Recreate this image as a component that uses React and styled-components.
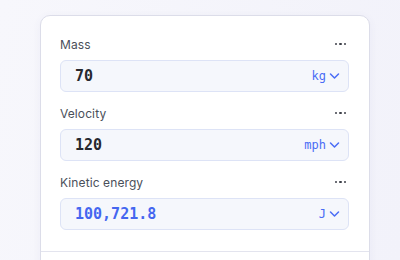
import React from 'react'
import styled, { createGlobalStyle } from 'styled-components'

const GlobalStyle = createGlobalStyle`
  html, body {
    margin: 0;
    padding: 0;
    height: 100%;
  }
  body {
    background: linear-gradient(100deg, #f7f7fc 0%, #f2f2fa 100%);
    font-family: Inter, "Noto Sans", sans-serif;
  }
`

const fields = [
  { label: 'Mass', value: '70', unit: 'kg' },
  { label: 'Velocity', value: '120', unit: 'mph' },
  { label: 'Kinetic energy', value: '100,721.8', unit: 'J', result: true },
]

const Page = styled.div`
  padding: 15px 30px 0 40px;
`

const Card = styled.div`
  width: 330px;
  box-sizing: border-box;
  background: #fff;
  border: 1px solid #dcdde9;
  border-radius: 10px;
  box-shadow: 0 2px 8px rgba(90, 90, 160, 0.06);
`

const Body = styled.div`
  display: flex;
  flex-direction: column;
  gap: 11px;
  padding: 18px 20px 21px 19px;
  border-bottom: 1px solid #e3e4ee;
`

const Field = styled.div`
  display: flex;
  flex-direction: column;
  gap: 6px;
`

const LabelRow = styled.div`
  height: 20px;
  display: flex;
  align-items: center;
  justify-content: space-between;
  padding-right: 3px;
`

const Label = styled.span`
  font-size: 12px;
  color: #4a4f5a;
  letter-spacing: 0.1px;
`

const Dots = styled.span`
  display: flex;
  gap: 2px;
  span {
    width: 2.4px;
    height: 2.4px;
    border-radius: 50%;
    background: #3c3f48;
  }
`

const InputBox = styled.div`
  height: 32px;
  box-sizing: border-box;
  display: flex;
  align-items: center;
  justify-content: space-between;
  padding: 0 8px 0 14px;
  background: #f5f7fc;
  border: 1px solid #dde3f6;
  border-radius: 6px;
`

const Value = styled.span`
  font-family: "DejaVu Sans Mono", "Liberation Mono", monospace;
  font-weight: bold;
  font-size: 15px;
  color: ${({ $result }) => ($result ? '#4466f0' : '#26282e')};
`

const Unit = styled.span`
  display: flex;
  align-items: center;
  gap: 3px;
  font-family: "DejaVu Sans Mono", "Liberation Mono", monospace;
  font-size: 12px;
  color: #4a6cf5;
`

const Footer = styled.div`
  height: 40px;
`

const Chevron = () => (
  <svg width="11" height="10" viewBox="0 0 11 10" fill="none">
    <path d="M1.5 3 L5.5 7 L9.5 3" stroke="#4a6cf5" strokeWidth="1.5" strokeLinecap="round" strokeLinejoin="round" />
  </svg>
)

const App = () => {
  return (
    <Page>
      <GlobalStyle />
      <Card>
        <Body>
          {fields.map((f) => (
            <Field key={f.label}>
              <LabelRow>
                <Label>{f.label}</Label>
                <Dots>
                  <span />
                  <span />
                  <span />
                </Dots>
              </LabelRow>
              <InputBox>
                <Value $result={f.result}>{f.value}</Value>
                <Unit>
                  {f.unit}
                  <Chevron />
                </Unit>
              </InputBox>
            </Field>
          ))}
        </Body>
        <Footer />
      </Card>
    </Page>
  )
}

export default App
